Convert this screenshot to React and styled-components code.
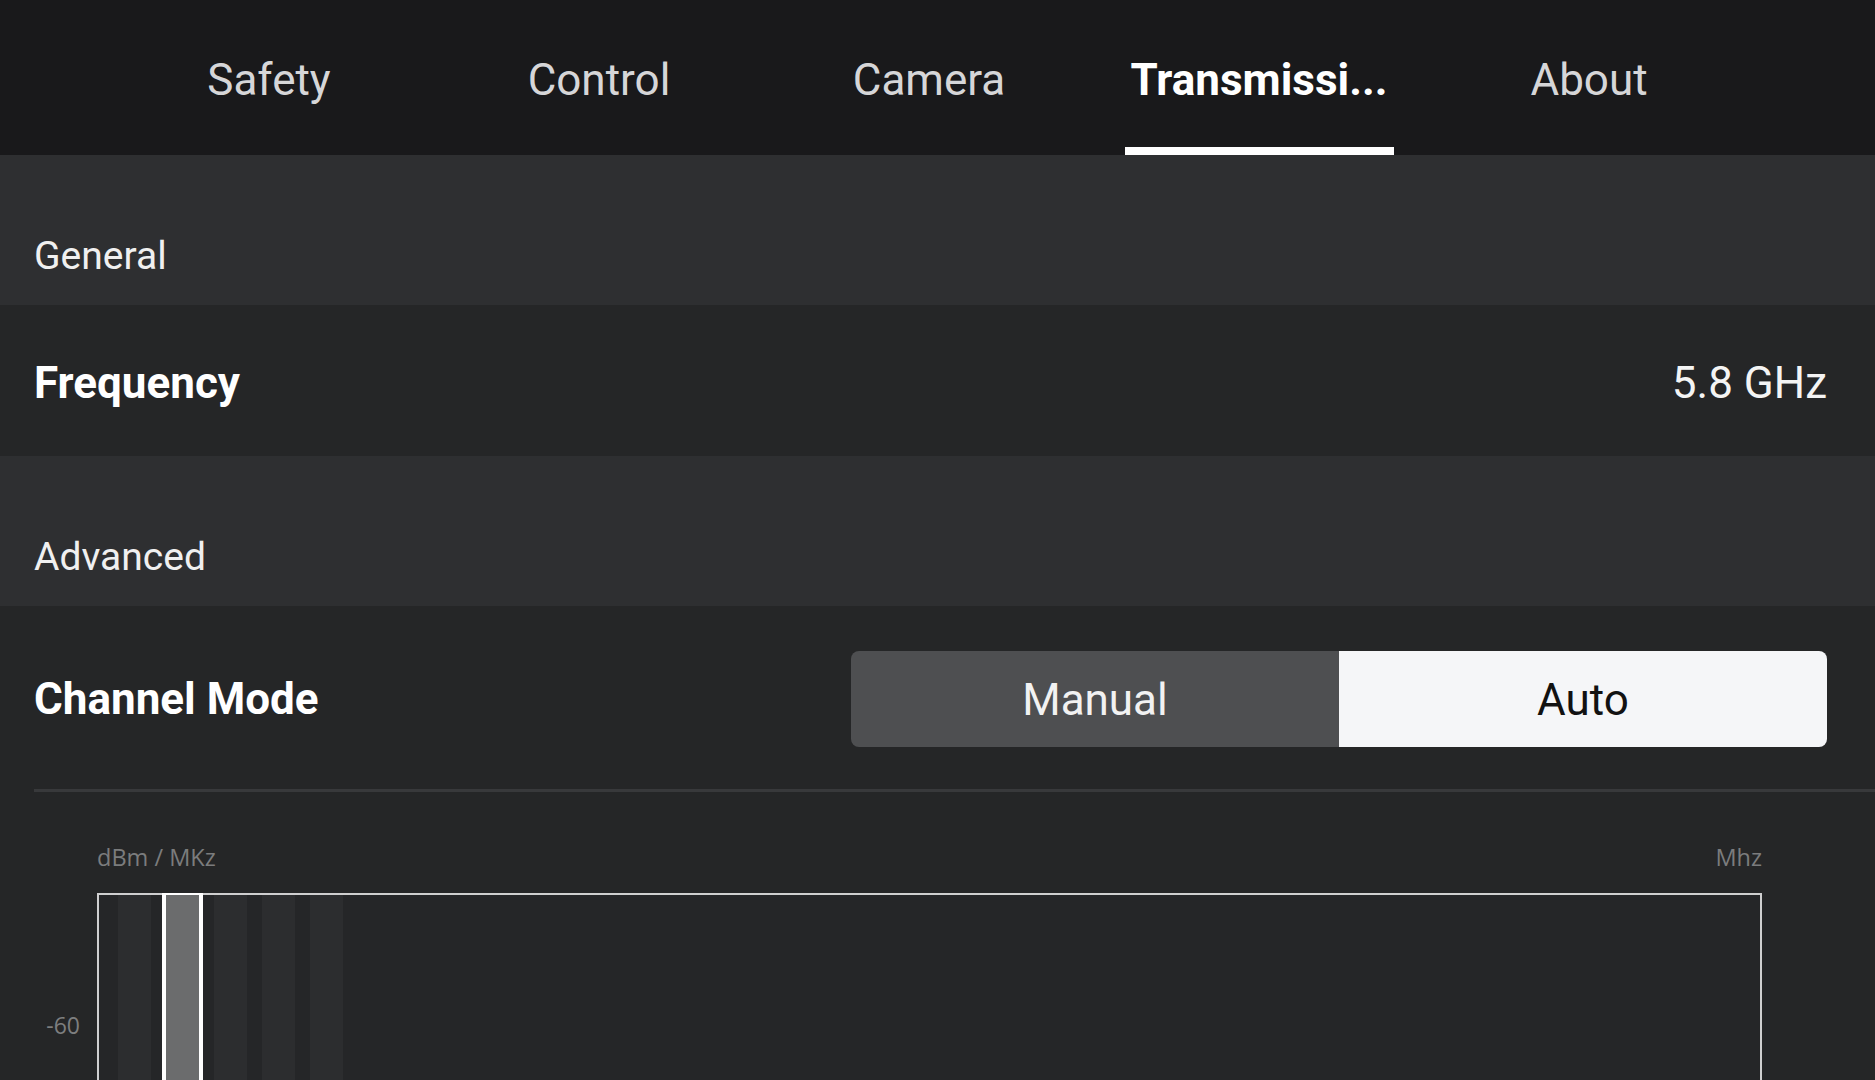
import React from 'react';
import styled, { createGlobalStyle, css } from 'styled-components';

const GlobalStyle = createGlobalStyle`
  * { box-sizing: border-box; }
  html, body {
    margin: 0;
    padding: 0;
    background: #252627;
    overflow: hidden;
  }
  body {
    font-family: Roboto, "Liberation Sans", sans-serif;
  }
`;

const Page = styled.div`
  width: 1875px;
  height: 1080px;
  overflow: hidden;
  background: #252627;
  display: flex;
  flex-direction: column;
`;

const TabBar = styled.nav`
  flex-shrink: 0;
  height: 155px;
  background: #19191b;
  display: flex;
  padding-left: 104px;
`;

const Tab = styled.div`
  position: relative;
  width: 330px;
  display: flex;
  align-items: center;
  justify-content: center;
  padding-top: 4px;
  font-size: 44px;
  font-weight: ${p => (p.$active ? 700 : 400)};
  color: ${p => (p.$active ? '#ffffff' : '#d6d6d8')};
  white-space: nowrap;
  ${p =>
    p.$active &&
    css`
      &::after {
        content: '';
        position: absolute;
        left: 50%;
        bottom: 0;
        width: 269px;
        height: 8px;
        margin-left: -134.5px;
        background: #ffffff;
      }
    `}
`;

const SectionHeader = styled.div`
  flex-shrink: 0;
  height: 150px;
  background: #2e2f31;
  display: flex;
  align-items: flex-end;
  padding: 0 48px 29px 34px;
  font-size: 39px;
  line-height: 1;
  color: #f0f0f0;
`;

const Row = styled.div`
  flex-shrink: 0;
  height: 151px;
  background: #252627;
  display: flex;
  align-items: center;
  justify-content: space-between;
  padding: 4px 48px 0 34px;
`;

const DividedRow = styled.div`
  flex-shrink: 0;
  height: 186px;
  margin-left: 34px;
  border-bottom: 3px solid #38393b;
  display: flex;
  align-items: center;
  justify-content: space-between;
  padding: 3px 48px 0 0;
`;

const Label = styled.div`
  font-size: 44px;
  font-weight: 700;
  color: #ffffff;
`;

const Value = styled.div`
  font-size: 44px;
  font-weight: 400;
  color: #f4f4f4;
`;

const Segmented = styled.div`
  width: 976px;
  height: 96px;
  border-radius: 8px;
  overflow: hidden;
  display: grid;
  grid-template-columns: 1fr 1fr;
`;

const Segment = styled.div`
  display: flex;
  align-items: center;
  justify-content: center;
  font-size: 44px;
  padding-top: 2px;
  background: ${p => (p.$selected ? '#f5f6f8' : '#4e4f51')};
  color: ${p => (p.$selected ? '#121212' : '#f2f2f2')};
`;

const ChartGrid = styled.div`
  flex: 1;
  display: grid;
  grid-template-columns: 97px 1665px;
  grid-template-rows: auto 1fr;
  row-gap: 23px;
  padding-top: 54px;
  min-height: 0;
`;

const AxisCaption = styled.div`
  grid-column: 2;
  display: flex;
  justify-content: space-between;
  font-family: "Open Sans", "Liberation Sans", sans-serif;
  font-size: 23.5px;
  line-height: 1;
  color: #7b7c7d;
`;

const YAxis = styled.div`
  grid-column: 1;
  padding: 121px 17px 0 0;
  text-align: right;
  font-family: "Open Sans", "Liberation Sans", sans-serif;
  font-size: 23px;
  line-height: 1;
  color: #7d7e7f;
`;

const PlotBox = styled.div`
  grid-column: 2;
  height: 420px;
  border: 2px solid #cfcfd0;
  display: flex;
  align-items: stretch;
  gap: 15px;
  padding-left: 19px;
  background: #252628;
`;

const Bar = styled.div`
  width: 33px;
  background: #2c2d2f;
  ${p =>
    p.$selected &&
    css`
      width: 41px;
      margin: -2px -4px 0;
      border: 4px solid #ffffff;
      border-top-width: 2px;
      border-bottom: none;
      background: #6b6c6d;
    `}
`;

const tabs = ['Safety', 'Control', 'Camera', 'Transmissi...', 'About'];
const bars = [false, true, false, false, false];

export default function App() {
  return (
    <Page>
      <GlobalStyle />
      <TabBar>
        {tabs.map((t, i) => (
          <Tab key={t} $active={i === 3}>
            {t}
          </Tab>
        ))}
      </TabBar>

      <SectionHeader>General</SectionHeader>
      <Row>
        <Label>Frequency</Label>
        <Value>5.8 GHz</Value>
      </Row>

      <SectionHeader>Advanced</SectionHeader>
      <DividedRow>
        <Label>Channel Mode</Label>
        <Segmented>
          <Segment>Manual</Segment>
          <Segment $selected>Auto</Segment>
        </Segmented>
      </DividedRow>

      <ChartGrid>
        <AxisCaption>
          <span>dBm / MKz</span>
          <span>Mhz</span>
        </AxisCaption>
        <YAxis>-60</YAxis>
        <PlotBox>
          {bars.map((s, i) => (
            <Bar key={i} $selected={s} />
          ))}
        </PlotBox>
      </ChartGrid>
    </Page>
  );
}
